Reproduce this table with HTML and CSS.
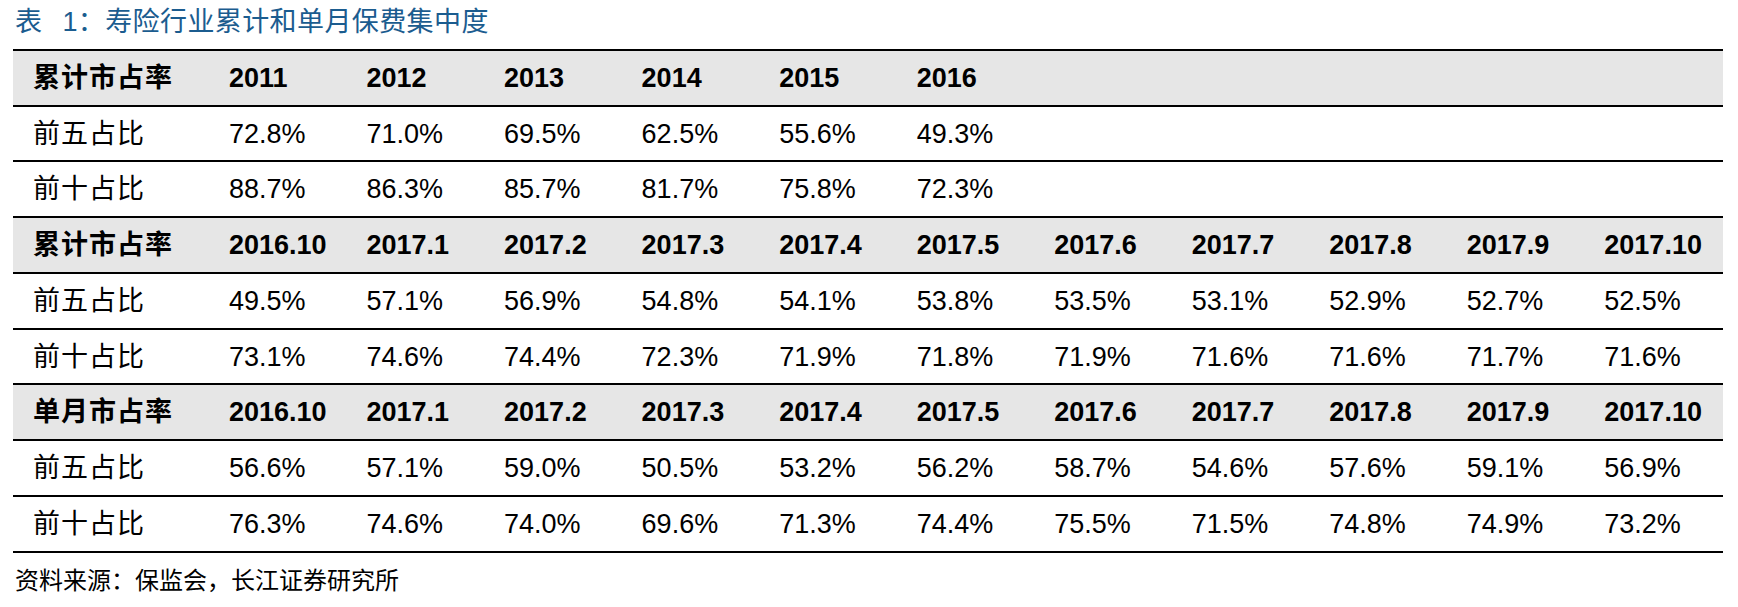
FILE: index.html
```html
<!DOCTYPE html>
<html lang="zh-CN">
<head>
<meta charset="utf-8">
<title>寿险行业累计和单月保费集中度</title>
<link rel="stylesheet" href="styles.css">
</head>
<body>
<div class="page">
  <div class="caption"><span class="cap-label">表</span>1：寿险行业累计和单月保费集中度</div>
  <table class="data">
    <colgroup>
      <col class="c-label">
      <col><col><col><col><col><col><col><col><col><col><col>
    </colgroup>
    <tbody>
      <tr class="head">
        <td>累计市占率</td><td>2011</td><td>2012</td><td>2013</td><td>2014</td><td>2015</td><td>2016</td><td></td><td></td><td></td><td></td><td></td>
      </tr>
      <tr>
        <td>前五占比</td><td>72.8%</td><td>71.0%</td><td>69.5%</td><td>62.5%</td><td>55.6%</td><td>49.3%</td><td></td><td></td><td></td><td></td><td></td>
      </tr>
      <tr>
        <td>前十占比</td><td>88.7%</td><td>86.3%</td><td>85.7%</td><td>81.7%</td><td>75.8%</td><td>72.3%</td><td></td><td></td><td></td><td></td><td></td>
      </tr>
      <tr class="head">
        <td>累计市占率</td><td>2016.10</td><td>2017.1</td><td>2017.2</td><td>2017.3</td><td>2017.4</td><td>2017.5</td><td>2017.6</td><td>2017.7</td><td>2017.8</td><td>2017.9</td><td>2017.10</td>
      </tr>
      <tr>
        <td>前五占比</td><td>49.5%</td><td>57.1%</td><td>56.9%</td><td>54.8%</td><td>54.1%</td><td>53.8%</td><td>53.5%</td><td>53.1%</td><td>52.9%</td><td>52.7%</td><td>52.5%</td>
      </tr>
      <tr>
        <td>前十占比</td><td>73.1%</td><td>74.6%</td><td>74.4%</td><td>72.3%</td><td>71.9%</td><td>71.8%</td><td>71.9%</td><td>71.6%</td><td>71.6%</td><td>71.7%</td><td>71.6%</td>
      </tr>
      <tr class="head">
        <td>单月市占率</td><td>2016.10</td><td>2017.1</td><td>2017.2</td><td>2017.3</td><td>2017.4</td><td>2017.5</td><td>2017.6</td><td>2017.7</td><td>2017.8</td><td>2017.9</td><td>2017.10</td>
      </tr>
      <tr>
        <td>前五占比</td><td>56.6%</td><td>57.1%</td><td>59.0%</td><td>50.5%</td><td>53.2%</td><td>56.2%</td><td>58.7%</td><td>54.6%</td><td>57.6%</td><td>59.1%</td><td>56.9%</td>
      </tr>
      <tr>
        <td>前十占比</td><td>76.3%</td><td>74.6%</td><td>74.0%</td><td>69.6%</td><td>71.3%</td><td>74.4%</td><td>75.5%</td><td>71.5%</td><td>74.8%</td><td>74.9%</td><td>73.2%</td>
      </tr>
    </tbody>
  </table>
  <div class="source">资料来源：保监会，长江证券研究所</div>
</div>
</body>
</html>
```

FILE: styles.css
```css
html, body {
  margin: 0;
  padding: 0;
  background: #ffffff;
}

.page {
  padding: 2px 15px 0 13px;
  font-family: "Liberation Sans", "Noto Sans CJK SC", sans-serif;
  color: #000000;
}

.caption {
  padding-left: 2px;
  font-size: 27px;
  line-height: 40px;
  letter-spacing: 0.4px;
  color: #1b5c8f;
  margin-bottom: 7px;
  white-space: nowrap;
}

.cap-label {
  margin-right: 20px;
}

.data {
  width: 1710px;
  table-layout: fixed;
  border-collapse: separate;
  border-spacing: 0;
  border-top: 2px solid #000000;
}

.data col.c-label {
  width: 197px;
}

.data td {
  height: 55.74px;
  box-sizing: border-box;
  padding: 0 0 0 19px;
  border-bottom: 2px solid #000000;
  font-size: 27px;
  line-height: 30px;
  vertical-align: middle;
  white-space: nowrap;
  overflow: hidden;
}

.data td:first-child {
  padding-left: 20px;
  letter-spacing: 1px;
}

.data tr.head td {
  background: #e6e6e6;
  font-weight: bold;
}

.source {
  margin-top: 13px;
  padding-left: 2px;
  font-size: 24px;
  line-height: 30px;
  white-space: nowrap;
}
```
